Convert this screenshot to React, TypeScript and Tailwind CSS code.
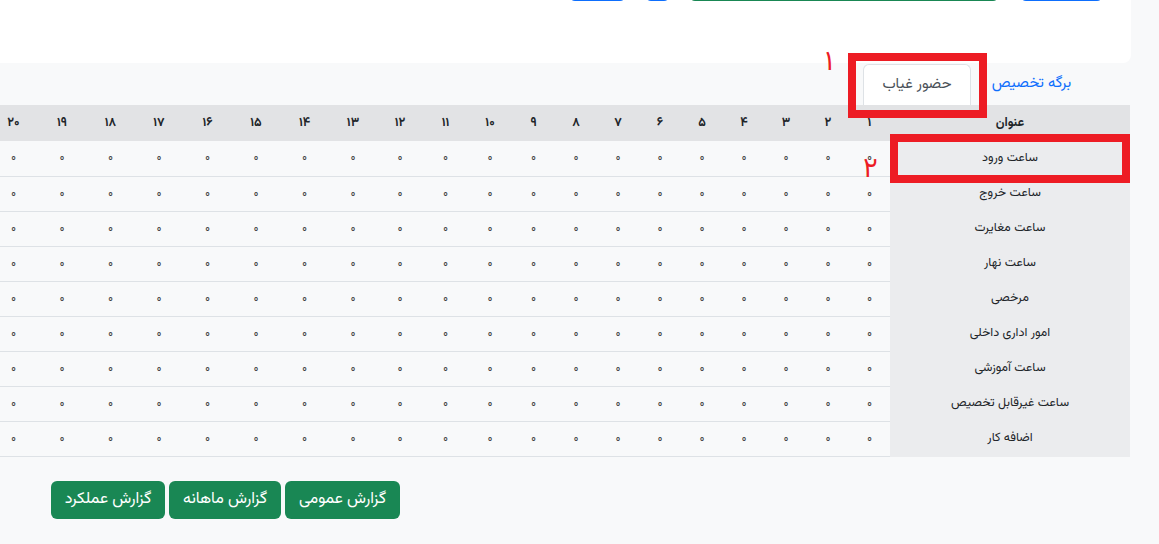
const fa = (n: number) => String(n).replace(/\d/g, (d) => '۰۱۲۳۴۵۶۷۸۹'[Number(d)])

const days = Array.from({ length: 31 }, (_, i) => i + 1)

// column widths measured from the screenshot
const colW = (d: number) => {
  if (d === 1) return 'w-[41px] min-w-[41px]'
  if (d <= 8) return 'w-[42px] min-w-[42px]'
  if (d === 9) return 'w-[43px] min-w-[43px]'
  if (d === 10) return 'w-[44px] min-w-[44px]'
  if (d === 11) return 'w-[45px] min-w-[45px]'
  if (d === 12) return 'w-[46px] min-w-[46px]'
  return d % 2 === 0 ? 'w-[49px] min-w-[49px]' : 'w-[48px] min-w-[48px]'
}

const rows = [
  'ساعت ورود',
  'ساعت خروج',
  'ساعت مغایرت',
  'ساعت نهار',
  'مرخصی',
  'امور اداری داخلی',
  'ساعت آموزشی',
  'ساعت غیرقابل تخصیص',
  'اضافه کار',
]

function Card() {
  return (
    <div className="-mt-[31px] h-[94px] w-[1250px] rounded-br-lg bg-white">
      <div className="flex h-[32px] pr-[28px]">
        <div className="h-[32px] w-[83px] rounded-md bg-[#0d6efd]" />
        <div className="mr-[21px] h-[32px] w-[310px] rounded-md bg-[#198754]" />
        <div className="mr-[19px] h-[32px] w-[25px] rounded-md bg-[#0d6efd]" />
        <div className="mr-[19px] h-[32px] w-[57px] rounded-md bg-[#0d6efd]" />
      </div>
    </div>
  )
}

function Tabs() {
  return (
    <div className="flex h-[42px] items-end">
      <a className="mr-[42px] flex h-[41px] w-[115px] items-center justify-center text-[15px] text-[#0d6efd]">
        برگه تخصیص
      </a>
      <div className="mr-[3px] flex h-[41px] w-[108px] items-center justify-center rounded-t-md border border-b-0 border-[#dee2e6] bg-white text-[15px] text-[#495057]">
        حضور غیاب
      </div>
    </div>
  )
}

function Table() {
  return (
    <table className="w-max border-collapse text-[12.5px] text-[#212529]">
      <thead>
        <tr className="h-[36px] bg-[#e2e3e5]">
          <th className="w-[240px] min-w-[240px] p-0 text-center font-bold">عنوان</th>
          {days.map((d) => (
            <th key={d} className={`${colW(d)} p-0 text-center font-bold`}>
              {fa(d)}
            </th>
          ))}
        </tr>
      </thead>
      <tbody>
        {rows.map((r) => (
          <tr key={r} className="h-[35px]">
            <td className="border-b border-[#ebecee] bg-[#ebecee] p-0 text-center">{r}</td>
            {days.map((d) => (
              <td key={d} className="border-b border-[#dee2e6] p-0 text-center text-[12px] text-[#444]">
                ۰
              </td>
            ))}
          </tr>
        ))}
      </tbody>
    </table>
  )
}

function Reports() {
  return (
    <div className="mt-[24px] flex justify-end gap-[4px] pl-[51px]">
      {['گزارش عمومی', 'گزارش ماهانه', 'گزارش عملکرد'].map((t, i) => (
        <button
          key={t}
          className={`flex h-[38px] items-center justify-center rounded-[6px] bg-[#198754] text-[16px] font-normal text-white ${
            i === 0 ? 'w-[115px]' : i === 1 ? 'w-[112px]' : 'w-[114px]'
          }`}
        >
          {t}
        </button>
      ))}
    </div>
  )
}

export default function App() {
  return (
    <div
      dir="rtl"
      className="relative h-[544px] w-[1159px] overflow-hidden bg-[#f8f9fa] font-['Vazirmatn','Vazir','Noto_Sans_Arabic','Noto_Naskh_Arabic','Tahoma','DejaVu_Sans',sans-serif]"
    >
      <div className="mr-[28px]">
        <Card />
        <Tabs />
        <div className="mr-[1px]">
          <Table />
        </div>
        <Reports />
      </div>

      {/* red annotations drawn over the screenshot */}
      <div className="pointer-events-none absolute left-[848px] top-[53px] h-[65px] w-[139px] border-[8px] border-[#ed1c24]" />
      <div className="pointer-events-none absolute left-[890px] top-[134px] h-[49px] w-[240px] border-[8px] border-[#ed1c24]" />
      <span className="absolute left-[825px] top-[49px] text-[28px] leading-none text-[#ed1c24]">۱</span>
      <span className="absolute left-[863px] top-[156px] text-[28px] leading-none text-[#ed1c24]">۲</span>
    </div>
  )
}
